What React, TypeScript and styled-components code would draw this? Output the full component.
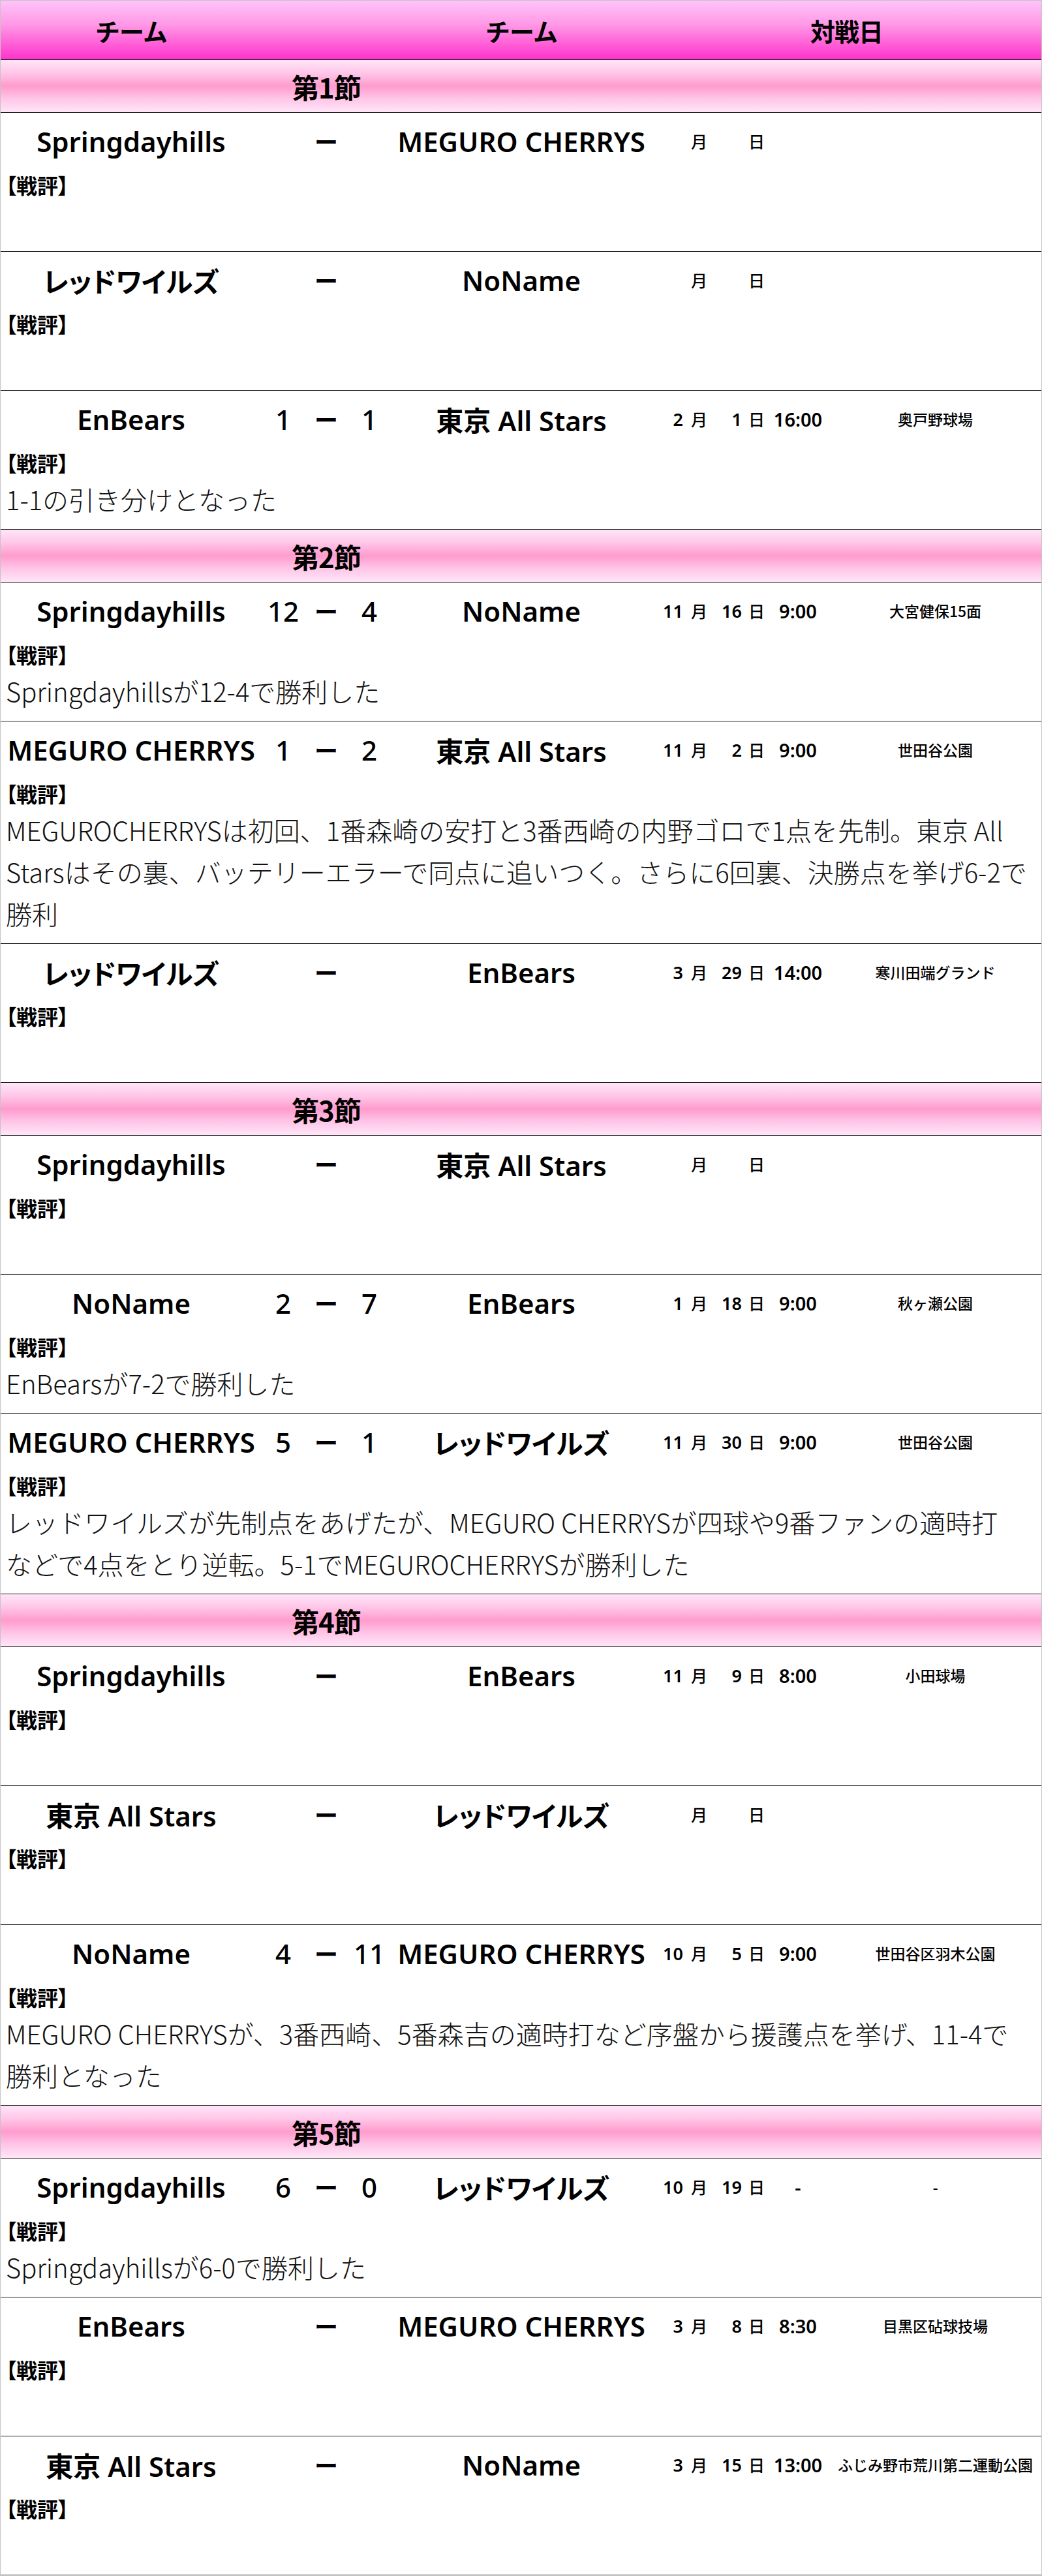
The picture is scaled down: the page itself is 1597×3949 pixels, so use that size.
import { Fragment } from 'react';
import styled, { createGlobalStyle } from 'styled-components';

type Match = {
    home: string;
    away: string;
    homeScore?: string;
    awayScore?: string;
    month?: string;
    day?: string;
    time?: string;
    venue?: string;
    comment?: string[];
};

type Section = {
    label: string;
    matches: Match[];
};

const SECTIONS: Section[] = [
    {
        label: '第1節',
        matches: [
            { home: 'Springdayhills', away: 'MEGURO CHERRYS' },
            { home: 'レッドワイルズ', away: 'NoName' },
            {
                home: 'EnBears',
                away: '東京 All Stars',
                homeScore: '1',
                awayScore: '1',
                month: '2',
                day: '1',
                time: '16:00',
                venue: '奥戸野球場',
                comment: ['1-1の引き分けとなった'],
            },
        ],
    },
    {
        label: '第2節',
        matches: [
            {
                home: 'Springdayhills',
                away: 'NoName',
                homeScore: '12',
                awayScore: '4',
                month: '11',
                day: '16',
                time: '9:00',
                venue: '大宮健保15面',
                comment: ['Springdayhillsが12-4で勝利した'],
            },
            {
                home: 'MEGURO CHERRYS',
                away: '東京 All Stars',
                homeScore: '1',
                awayScore: '2',
                month: '11',
                day: '2',
                time: '9:00',
                venue: '世田谷公園',
                comment: [
                    'MEGUROCHERRYSは初回、1番森崎の安打と3番西崎の内野ゴロで1点を先制。東京 All',
                    'Starsはその裏、バッテリーエラーで同点に追いつく。さらに6回裏、決勝点を挙げ6-2で',
                    '勝利',
                ],
            },
            {
                home: 'レッドワイルズ',
                away: 'EnBears',
                month: '3',
                day: '29',
                time: '14:00',
                venue: '寒川田端グランド',
            },
        ],
    },
    {
        label: '第3節',
        matches: [
            { home: 'Springdayhills', away: '東京 All Stars' },
            {
                home: 'NoName',
                away: 'EnBears',
                homeScore: '2',
                awayScore: '7',
                month: '1',
                day: '18',
                time: '9:00',
                venue: '秋ヶ瀬公園',
                comment: ['EnBearsが7-2で勝利した'],
            },
            {
                home: 'MEGURO CHERRYS',
                away: 'レッドワイルズ',
                homeScore: '5',
                awayScore: '1',
                month: '11',
                day: '30',
                time: '9:00',
                venue: '世田谷公園',
                comment: [
                    'レッドワイルズが先制点をあげたが、MEGURO CHERRYSが四球や9番ファンの適時打',
                    'などで4点をとり逆転。5-1でMEGUROCHERRYSが勝利した',
                ],
            },
        ],
    },
    {
        label: '第4節',
        matches: [
            {
                home: 'Springdayhills',
                away: 'EnBears',
                month: '11',
                day: '9',
                time: '8:00',
                venue: '小田球場',
            },
            { home: '東京 All Stars', away: 'レッドワイルズ' },
            {
                home: 'NoName',
                away: 'MEGURO CHERRYS',
                homeScore: '4',
                awayScore: '11',
                month: '10',
                day: '5',
                time: '9:00',
                venue: '世田谷区羽木公園',
                comment: [
                    'MEGURO CHERRYSが、3番西崎、5番森吉の適時打など序盤から援護点を挙げ、11-4で',
                    '勝利となった',
                ],
            },
        ],
    },
    {
        label: '第5節',
        matches: [
            {
                home: 'Springdayhills',
                away: 'レッドワイルズ',
                homeScore: '6',
                awayScore: '0',
                month: '10',
                day: '19',
                time: '-',
                venue: '-',
                comment: ['Springdayhillsが6-0で勝利した'],
            },
            {
                home: 'EnBears',
                away: 'MEGURO CHERRYS',
                month: '3',
                day: '8',
                time: '8:30',
                venue: '目黒区砧球技場',
            },
            {
                home: '東京 All Stars',
                away: 'NoName',
                month: '3',
                day: '15',
                time: '13:00',
                venue: 'ふじみ野市荒川第二運動公園',
            },
        ],
    },
];

const App = () => {
    return (
        <>
            <GlobalStyle />
            <Table>
                <HeaderRow>
                    <HeaderCell>チーム</HeaderCell>
                    <HeaderCell />
                    <HeaderCell>チーム</HeaderCell>
                    <HeaderCell>対戦日</HeaderCell>
                </HeaderRow>
                {SECTIONS.map((section) => (
                    <div key={section.label}>
                        <SectionRow>
                            <span />
                            <SectionLabel>{section.label}</SectionLabel>
                        </SectionRow>
                        {section.matches.map((m, i) => (
                            <MatchRow key={i}>
                                <MatchLine>
                                    <Team>{m.home}</Team>
                                    <Score>{m.homeScore}</Score>
                                    <Dash>ー</Dash>
                                    <Score>{m.awayScore}</Score>
                                    <Team>{m.away}</Team>
                                    <DateNum>{m.month}</DateNum>
                                    <DateUnit>月</DateUnit>
                                    <DateNum $day>{m.day}</DateNum>
                                    <DateUnit>日</DateUnit>
                                    <Time>{m.time}</Time>
                                    <Venue>{m.venue}</Venue>
                                </MatchLine>
                                <ReviewLabel>【戦評】</ReviewLabel>
                                <Comment>
                                    {(m.comment || []).map((line, j) => (
                                        <Fragment key={j}>
                                            {j > 0 && <br />}
                                            {line}
                                        </Fragment>
                                    ))}
                                </Comment>
                            </MatchRow>
                        ))}
                    </div>
                ))}
            </Table>
        </>
    );
};

const GlobalStyle = createGlobalStyle`
    body {
        margin: 0;
        background: #fff;
        color: #000;
        font-family: 'Noto Sans CJK JP', sans-serif;
    }
`;

const Table = styled.section`
    width: 1597px;
    box-sizing: border-box;
    border: 1px solid #c4c4c4;
    border-bottom: none;
    padding-bottom: 4px;
`;

const HeaderRow = styled.div`
    display: grid;
    grid-template-columns: 400px 198px 400px 1fr;
    height: 90px;
    align-items: center;
    background: linear-gradient(to bottom, #ffc4fa 0%, #ff99e6 40%, #ff33cc 100%);
    border-bottom: 1px solid #1a1a1a;
`;

const HeaderCell = styled.div`
    text-align: center;
    font-size: 38px;
    font-weight: 700;
    letter-spacing: -1px;
`;

const SectionRow = styled.div`
    display: grid;
    grid-template-columns: 400px 198px 1fr;
    height: 80px;
    align-items: center;
    background: linear-gradient(to bottom, #ffe6f8 0%, #ffc6e8 25%, #ff9ccd 50%, #ffc6e8 75%, #ffe6f8 100%);
    border-bottom: 1px solid #1a1a1a;
`;

const SectionLabel = styled.div`
    text-align: center;
    font-size: 42px;
    font-weight: 700;
    letter-spacing: -1px;
`;

const MatchRow = styled.div`
    padding-bottom: 14px;
    border-bottom: 1px solid #1a1a1a;
`;

const MatchLine = styled.div`
    display: grid;
    grid-template-columns: 400px 66px 66px 66px 400px 60px 28px 60px 28px 96px 1fr;
    height: 86px;
    align-items: center;
`;

const Team = styled.div`
    text-align: center;
    font-family: 'Noto Sans', 'Noto Sans CJK JP', sans-serif;
    font-size: 42px;
    font-weight: 600;
    font-feature-settings: 'palt';
    white-space: nowrap;
`;

const Score = styled.div`
    text-align: center;
    font-family: 'Noto Sans', 'Noto Sans CJK JP', sans-serif;
    font-size: 42px;
    font-weight: 500;
`;

const Dash = styled.div`
    text-align: center;
    font-size: 36px;
    font-weight: 700;
`;

const DateNum = styled.div<{ $day?: boolean }>`
    text-align: right;
    padding-right: ${(props) => (props.$day ? '10px' : '12px')};
    font-family: 'Noto Sans', 'Noto Sans CJK JP', sans-serif;
    font-size: 27px;
    font-weight: 600;
`;

const DateUnit = styled.div`
    font-size: 25px;
    font-weight: 500;
`;

const Time = styled.div`
    text-align: center;
    font-family: 'Noto Sans', 'Noto Sans CJK JP', sans-serif;
    font-size: 29px;
    font-weight: 600;
`;

const Venue = styled.div`
    text-align: center;
    font-size: 23px;
    font-weight: 500;
    white-space: nowrap;
`;

const ReviewLabel = styled.div`
    padding: 0 8px;
    height: 48px;
    line-height: 48px;
    font-size: 32px;
    font-weight: 700;
    font-feature-settings: 'palt';
`;

const Comment = styled.p`
    margin: 0;
    padding: 0 0 0 8px;
    min-height: 64px;
    font-size: 40px;
    font-weight: 300;
    line-height: 64px;
    color: #111;
    white-space: nowrap;
`;

export default App;
